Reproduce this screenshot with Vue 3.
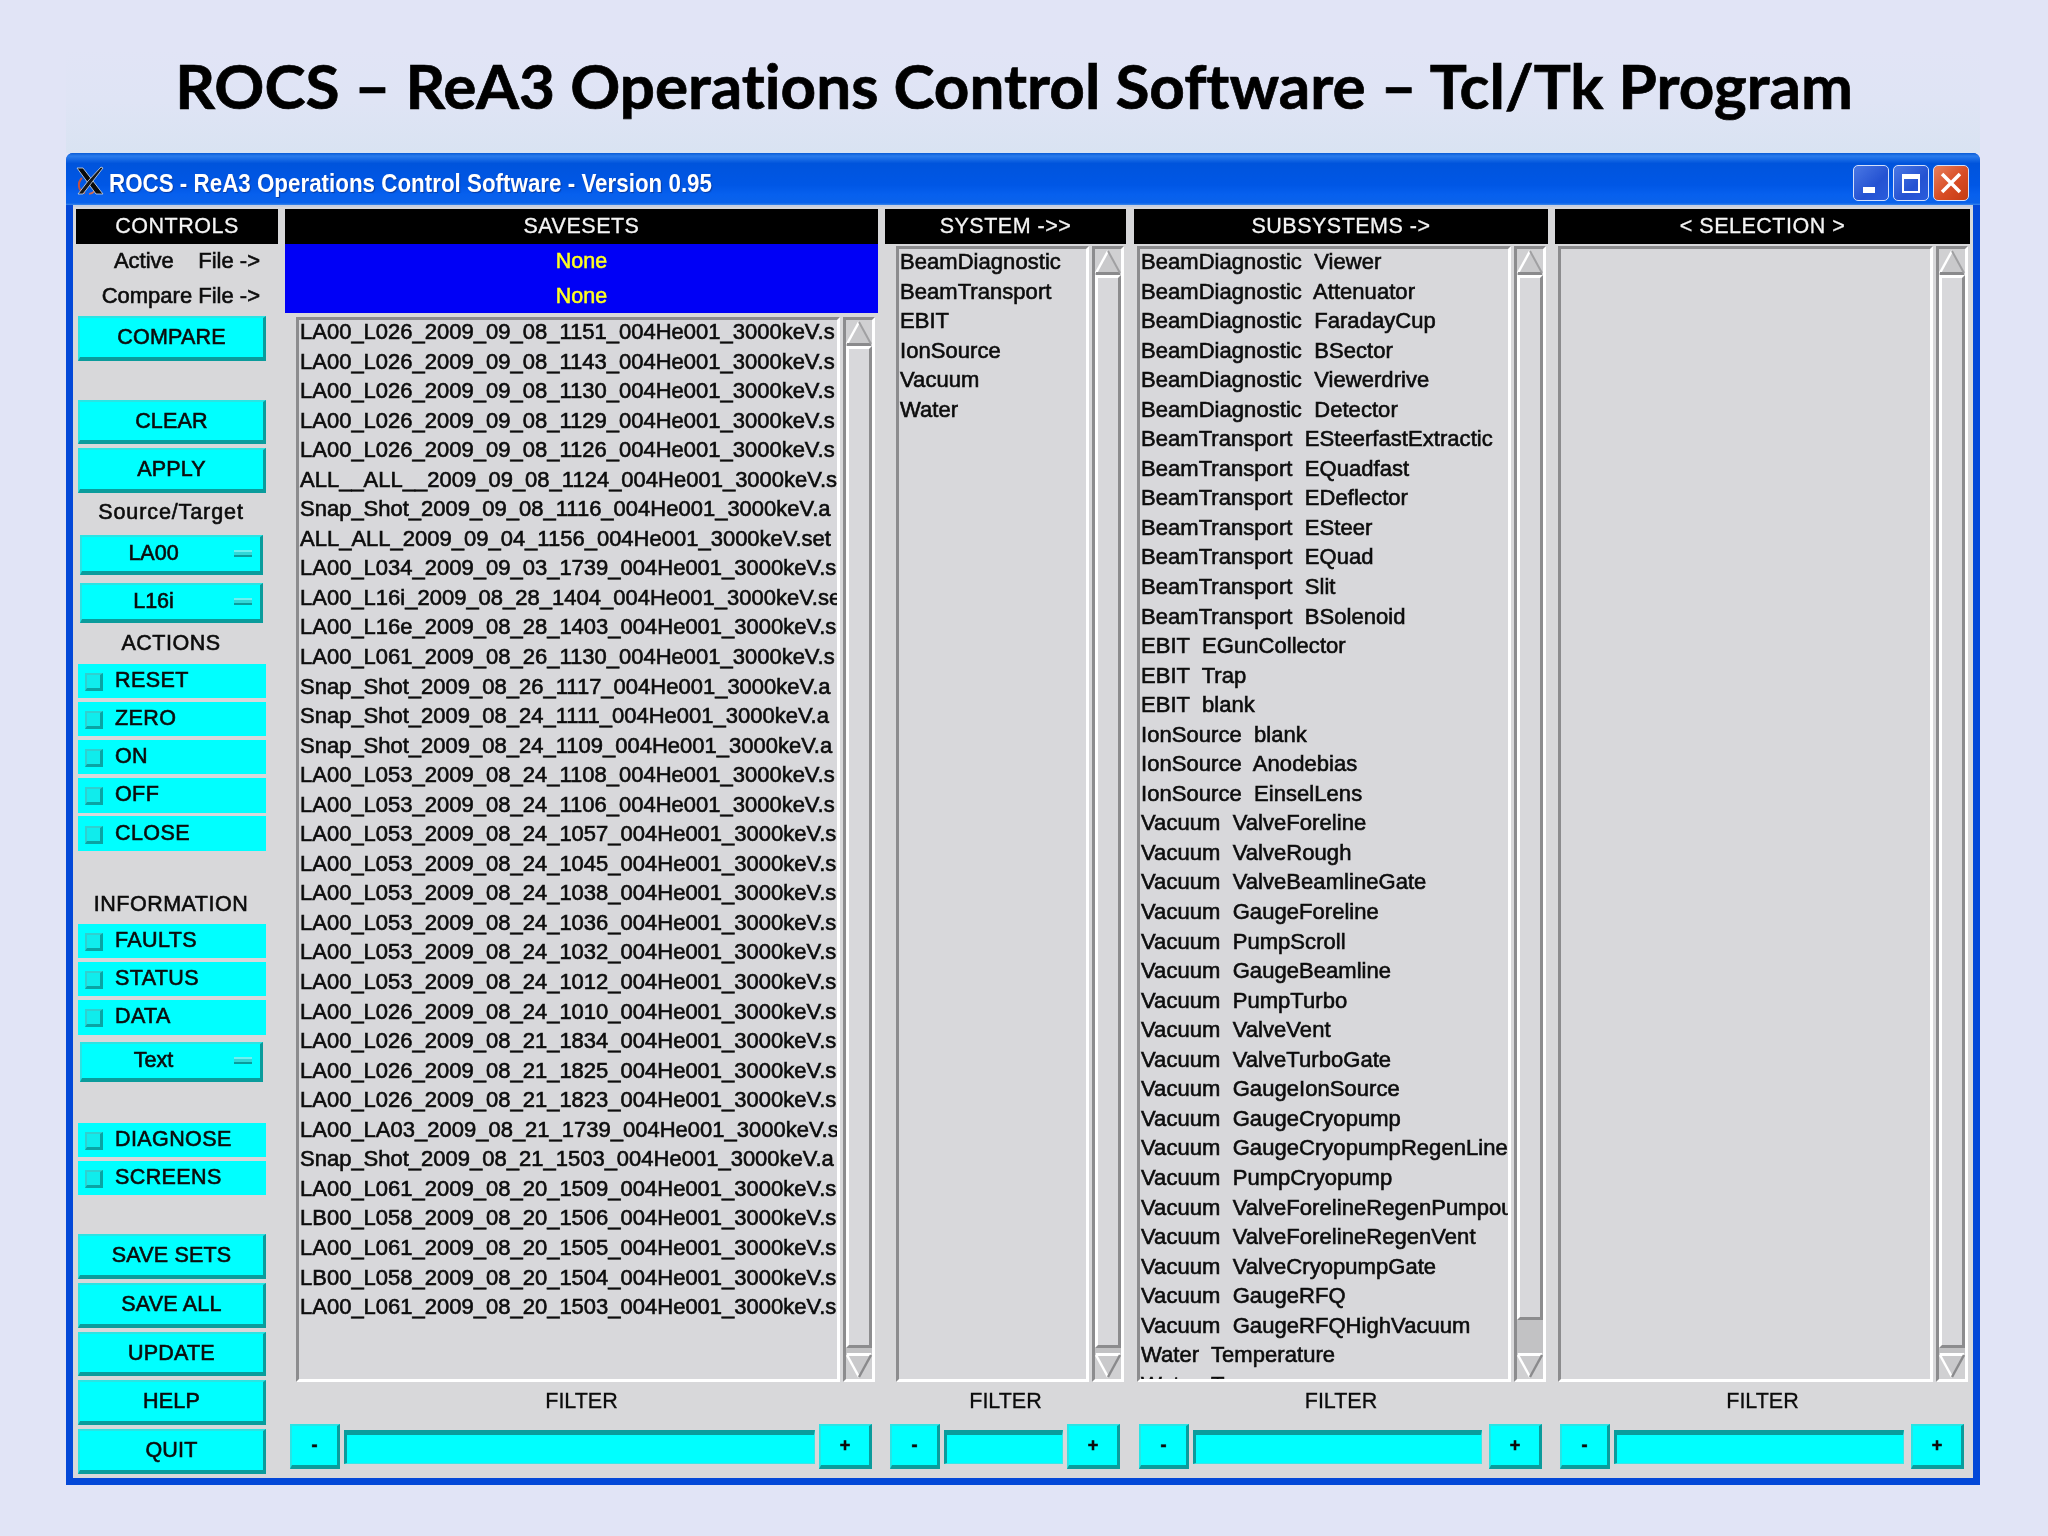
<script setup>
const stem = '_004He001_3000keV'
const savesets = [
  'LA00_L026_2009_09_08_1151.s','LA00_L026_2009_09_08_1143.s','LA00_L026_2009_09_08_1130.s','LA00_L026_2009_09_08_1129.s','LA00_L026_2009_09_08_1126.s',
  'ALL__ALL__2009_09_08_1124.s','Snap_Shot_2009_09_08_1116.a','ALL_ALL_2009_09_04_1156.set','LA00_L034_2009_09_03_1739.s','LA00_L16i_2009_08_28_1404.se',
  'LA00_L16e_2009_08_28_1403.s','LA00_L061_2009_08_26_1130.s','Snap_Shot_2009_08_26_1117.a','Snap_Shot_2009_08_24_1111.a','Snap_Shot_2009_08_24_1109.a',
  'LA00_L053_2009_08_24_1108.s','LA00_L053_2009_08_24_1106.s','LA00_L053_2009_08_24_1057.s','LA00_L053_2009_08_24_1045.s','LA00_L053_2009_08_24_1038.s',
  'LA00_L053_2009_08_24_1036.s','LA00_L053_2009_08_24_1032.s','LA00_L053_2009_08_24_1012.s','LA00_L026_2009_08_24_1010.s','LA00_L026_2009_08_21_1834.s',
  'LA00_L026_2009_08_21_1825.s','LA00_L026_2009_08_21_1823.s','LA00_LA03_2009_08_21_1739.s','Snap_Shot_2009_08_21_1503.a','LA00_L061_2009_08_20_1509.s',
  'LB00_L058_2009_08_20_1506.s','LA00_L061_2009_08_20_1505.s','LB00_L058_2009_08_20_1504.s','LA00_L061_2009_08_20_1503.s'
].map(s => { const i = s.lastIndexOf('.'); return s.slice(0, i) + stem + s.slice(i) })
const systems = ['BeamDiagnostic','BeamTransport','EBIT','IonSource','Vacuum','Water']
const subsystems = [
  'BeamDiagnostic  Viewer','BeamDiagnostic  Attenuator','BeamDiagnostic  FaradayCup','BeamDiagnostic  BSector','BeamDiagnostic  Viewerdrive','BeamDiagnostic  Detector',
  'BeamTransport  ESteerfastExtractic','BeamTransport  EQuadfast','BeamTransport  EDeflector','BeamTransport  ESteer','BeamTransport  EQuad','BeamTransport  Slit','BeamTransport  BSolenoid',
  'EBIT  EGunCollector','EBIT  Trap','EBIT  blank','IonSource  blank','IonSource  Anodebias','IonSource  EinselLens',
  'Vacuum  ValveForeline','Vacuum  ValveRough','Vacuum  ValveBeamlineGate','Vacuum  GaugeForeline','Vacuum  PumpScroll','Vacuum  GaugeBeamline','Vacuum  PumpTurbo','Vacuum  ValveVent','Vacuum  ValveTurboGate','Vacuum  GaugeIonSource','Vacuum  GaugeCryopump','Vacuum  GaugeCryopumpRegenLine','Vacuum  PumpCryopump','Vacuum  ValveForelineRegenPumpou','Vacuum  ValveForelineRegenVent','Vacuum  ValveCryopumpGate','Vacuum  GaugeRFQ','Vacuum  GaugeRFQHighVacuum','Water  Temperature','Water  T'
]
const actions = ['RESET','ZERO','ON','OFF','CLOSE']
const info = ['FAULTS','STATUS','DATA']
const tools = ['DIAGNOSE','SCREENS']
const bottom = ['SAVE SETS','SAVE ALL','UPDATE','HELP','QUIT']
const activeLabel = 'Active    File ->'
const compareLabel = 'Compare File ->'
const columns = [
  { key: 'system', title: 'SYSTEM ->>', items: systems, cls: 'c-system', rest: 5 },
  { key: 'subsystems', title: 'SUBSYSTEMS ->', items: subsystems, cls: 'c-sub', rest: 33 },
  { key: 'selection', title: '< SELECTION >', items: [], cls: 'c-sel', rest: 5 }
]
</script>

<template>
  <div class="slide">
    <div class="band"></div>
    <h1 class="title">ROCS – ReA3 Operations Control Software – Tcl/Tk Program</h1>
    <div class="window">
      <div class="titlebar">
        <svg class="xlogo" viewBox="0 0 28 30" width="28" height="30">
          <path d="M6 12 C1 17 2 25 9 27" fill="none" stroke="#c8503c" stroke-width="2"/>
          <path d="M18 19 C21 24 18 27 13 28" fill="none" stroke="#d06a50" stroke-width="1.6"/>
          <path d="M1 2 H7 L27 28 H20 Z" fill="#0a0a0a" stroke="#c0ccdf" stroke-width="0.9"/>
          <path d="M25 1 L27 2 L7 28 H2 L12 15 Z" fill="#181818" stroke="#c0ccdf" stroke-width="0.9"/>
        </svg>
        <span class="wintitle">ROCS - ReA3 Operations Control Software - Version 0.95</span>
        <div class="winbtns">
          <div class="wb wb-min"><i></i></div>
          <div class="wb wb-max"><i></i></div>
          <div class="wb wb-close">
            <svg viewBox="0 0 20 20" width="22" height="22"><path d="M3 3 L17 17 M17 3 L3 17" stroke="#fff" stroke-width="3.2" stroke-linecap="square"/></svg>
          </div>
        </div>
      </div>
      <div class="body">
        <section class="col c-controls">
          <div class="head">CONTROLS</div>
          <div class="filelabel">{{ activeLabel }}</div>
          <div class="filelabel">{{ compareLabel }}</div>
          <div class="btn m-compare">COMPARE</div>
          <div class="btn m-clear">CLEAR</div>
          <div class="btn m-apply">APPLY</div>
          <div class="lab l-source">Source/Target</div>
          <div class="opt">
            <span>LA00</span><i></i>
          </div>
          <div class="opt m-opt2">
            <span>L16i</span><i></i>
          </div>
          <div class="lab l-actions">ACTIONS</div>
          <div class="checks">
            <div v-for="a in actions" :key="a" class="check"><i></i><span>{{ a }}</span></div>
          </div>
          <div class="lab l-info">INFORMATION</div>
          <div class="checks">
            <div v-for="a in info" :key="a" class="check"><i></i><span>{{ a }}</span></div>
          </div>
          <div class="opt m-opt3">
            <span>Text</span><i></i>
          </div>
          <div class="checks m-tools">
            <div v-for="a in tools" :key="a" class="check"><i></i><span>{{ a }}</span></div>
          </div>
          <div class="stack">
            <div v-for="b in bottom" :key="b" class="btn">{{ b }}</div>
          </div>
        </section>

        <section class="col c-save">
          <div class="head">SAVESETS</div>
          <div class="none">None</div>
          <div class="none">None</div>
          <div class="listrow saverow">
            <div class="list">
              <ul>
                <li v-for="s in savesets" :key="s">{{ s }}</li>
              </ul>
            </div>
            <div class="scroll">
              <svg class="arr" viewBox="0 0 26 26" preserveAspectRatio="none"><path d="M13 2 L1 24 H25 Z" fill="#c9c9cb"/><path d="M13 2 L1 24" stroke="#fff" stroke-width="2.4"/><path d="M1 24.5 H25" stroke="#8a8a8c" stroke-width="3"/><path d="M13 2 L25 24" stroke="#a0a0a2" stroke-width="2"/></svg>
              <div class="thumb"></div>
              <div class="rest" :style="{ height: '5px' }"></div>
              <svg class="arr" viewBox="0 0 26 26" preserveAspectRatio="none"><path d="M13 24 L1 2 H25 Z" fill="#c9c9cb"/><path d="M1 1.5 H25" stroke="#fff" stroke-width="3"/><path d="M13 24 L1 2" stroke="#fff" stroke-width="2.4"/><path d="M13 24 L25 2" stroke="#8a8a8c" stroke-width="2.4"/></svg>
            </div>
          </div>
          <div class="filterlab">FILTER</div>
          <div class="filter">
            <div class="btn small">-</div>
            <div class="entry"></div>
            <div class="btn small plus">+</div>
          </div>
        </section>

        <section v-for="c in columns" :key="c.key" class="col" :class="c.cls">
          <div class="head">{{ c.title }}</div>
          <div class="listrow">
            <div class="list">
              <ul>
                <li v-for="(s, i) in c.items" :key="i">{{ s }}</li>
              </ul>
            </div>
            <div class="scroll">
              <svg class="arr" viewBox="0 0 26 26" preserveAspectRatio="none"><path d="M13 2 L1 24 H25 Z" fill="#c9c9cb"/><path d="M13 2 L1 24" stroke="#fff" stroke-width="2.4"/><path d="M1 24.5 H25" stroke="#8a8a8c" stroke-width="3"/><path d="M13 2 L25 24" stroke="#a0a0a2" stroke-width="2"/></svg>
              <div class="thumb"></div>
              <div class="rest" :style="{ height: c.rest + 'px' }"></div>
              <svg class="arr" viewBox="0 0 26 26" preserveAspectRatio="none"><path d="M13 24 L1 2 H25 Z" fill="#c9c9cb"/><path d="M1 1.5 H25" stroke="#fff" stroke-width="3"/><path d="M13 24 L1 2" stroke="#fff" stroke-width="2.4"/><path d="M13 24 L25 2" stroke="#8a8a8c" stroke-width="2.4"/></svg>
            </div>
          </div>
          <div class="filterlab">FILTER</div>
          <div class="filter">
            <div class="btn small">-</div>
            <div class="entry"></div>
            <div class="btn small plus">+</div>
          </div>
        </section>
      </div>
    </div>
  </div>
</template>

<style>
html, body { margin: 0; background: #e1e4f6; }
</style>

<style scoped>
.slide {
  position: relative;
  width: 2048px;
  height: 1536px;
  overflow: hidden;
  background: #e1e4f6;
  font-family: "Liberation Sans", Arial, sans-serif;
  color: #0c0c0c;
}
.band {
  position: absolute;
  left: 66px;
  top: 50px;
  width: 1914px;
  height: 103px;
  background: linear-gradient(#e1e4f6, #dfe4f5 50%, #d9e3f2);
}
.title {
  position: relative;
  margin: 0;
  height: 153px;
  box-sizing: border-box;
  padding: 47px 20px 0 0;
  font-family: Lato, "Open Sans", sans-serif;
  font-weight: 700;
  font-size: 62px;
  font-variant-ligatures: none;
  line-height: 76px;
  text-align: center;
  color: #000;
  white-space: nowrap;
  -webkit-text-stroke: 0.7px #000;
}
.window {
  position: relative;
  margin-left: 66px;
  width: 1914px;
  height: 1332px;
  box-sizing: border-box;
  border-radius: 7px 7px 0 0;
  background: #0348d8;
  overflow: hidden;
  display: flex;
  flex-direction: column;
  filter: blur(0.4px);
}
.titlebar {
  height: 52px;
  flex: none;
  display: flex;
  align-items: center;
  padding: 0 10px 0 10px;
  background: linear-gradient(#0a5cd6 0, #2a7cec 6%, #0054dc 20%, #0057e6 62%, #0760ee 80%, #0a62ea 96%, #3a86e8 100%);
}
.xlogo { flex: none; margin-top: 4px; }
.wintitle {
  margin-left: 5px;
  margin-top: 8px;
  color: #fff;
  font-weight: 700;
  font-size: 25px;
  line-height: 32px;
  white-space: pre;
  transform: scaleX(0.895);
  transform-origin: left center;
  text-shadow: 1px 1px 1px #0a3aa0;
}
.winbtns { margin-left: auto; display: flex; gap: 4px; margin-top: 8px; margin-right: 1px; }
.wb {
  width: 36px;
  height: 36px;
  box-sizing: border-box;
  border: 1.5px solid #d4e0fa;
  border-radius: 5px;
  display: flex;
  align-items: center;
  justify-content: center;
  background: linear-gradient(135deg, #4a78e4, #2452d2 60%, #2a5cdc);
}
.wb-min { align-items: flex-end; }
.wb-min i { display: block; width: 12px; height: 6px; background: #fff; margin: 0 5px 7px 0; }
.wb-max i { display: block; width: 18px; height: 19px; box-sizing: border-box; border: 2px solid #fff; border-top-width: 5px; }
.wb-close { background: linear-gradient(135deg, #e8805c, #d84c24 55%, #c43c14); }
.body {
  flex: 1;
  margin: 0 7.5px 7px 7px;
  background: #d8d8da;
  display: flex;
  padding: 4px 0 0 3px;
  gap: 7px;
  box-shadow: inset 0 2px 0 #c8cfe0;
}
.col { display: flex; flex-direction: column; flex: none; }
.c-controls { width: 202px; }
.c-save { width: 593px; }
.c-system { width: 241px; }
.c-sub { width: 414px; margin-left: 1px; }
.c-sel { width: 415px; }
.head {
  height: 35px;
  flex: none;
  background: #000;
  color: #f4f4f4;
  font-size: 21.5px;
  line-height: 35px;
  text-align: center;
  white-space: pre;
  letter-spacing: 0.5px;
  -webkit-text-stroke: 0.3px #f4f4f4;
}
.filelabel {
  height: 34.5px;
  line-height: 34px;
  font-size: 22px;
  text-align: right;
  padding-right: 18px;
  white-space: pre;
  -webkit-text-stroke: 0.6px #0c0c0c;
}
.btn {
  box-sizing: border-box;
  height: 44.5px;
  width: 188px;
  margin-left: 2px;
  flex: none;
  background: #00ffff;
  border-style: solid;
  border-width: 2px 3px 4px 2px;
  border-color: #2ae4e4 #0a9c9c #0a9c9c #2ae4e4;
  text-align: center;
  font-size: 21.5px;
  line-height: 38px;
  letter-spacing: 0.2px;
  -webkit-text-stroke: 0.6px #0c0c0c;
  white-space: pre;
}
.m-compare { margin-top: 3px; }
.m-clear { margin-top: 39px; }
.m-apply { margin-top: 4px; }
.lab {
  text-align: center;
  padding-right: 12px;
  font-size: 21.5px;
  -webkit-text-stroke: 0.6px #0c0c0c;
  white-space: pre;
  letter-spacing: 0.5px;
}
.l-source { height: 42px; line-height: 38px; letter-spacing: 0.9px; }
.l-actions { height: 41px; line-height: 41px; }
.l-info { height: 41px; line-height: 42px; margin-top: 32px; }
.opt {
  box-sizing: border-box;
  height: 40px;
  width: 183px;
  margin-left: 4px;
  flex: none;
  display: flex;
  align-items: center;
  background: #00ffff;
  border-style: solid;
  border-width: 2px 3px 4px 2px;
  border-color: #2ae4e4 #0a9c9c #0a9c9c #2ae4e4;
  font-size: 21.5px;
  -webkit-text-stroke: 0.6px #0c0c0c;
}
.opt span { flex: 1; text-align: center; padding-right: 9px; }
.opt i {
  flex: none;
  width: 18px;
  height: 7px;
  box-sizing: border-box;
  margin-right: 8px;
  background: #30d8d8;
  border-top: 2px solid #70f0f0;
  border-bottom: 2px solid #0a9c9c;
}
.m-opt2 { margin-top: 8px; }
.m-opt3 { margin-top: 7px; }
.checks { display: flex; flex-direction: column; gap: 3.7px; }
.check {
  height: 34.5px;
  width: 188px;
  margin-left: 2px;
  background: #00ffff;
  display: flex;
  align-items: center;
  font-size: 21.5px;
  letter-spacing: 0.4px;
  -webkit-text-stroke: 0.6px #0c0c0c;
}
.check i {
  flex: none;
  box-sizing: border-box;
  width: 18px;
  height: 18px;
  margin-left: 7px;
  margin-top: 2px;
  background: #10ecec;
  border-style: solid;
  border-width: 2px 3px 3px 2px;
  border-color: #30d0d0 #0aa4a4 #0aa4a4 #30d0d0;
}
.check span { margin-left: 12px; margin-top: -1px; }
.m-tools { margin-top: 41px; }
.stack { margin-top: 39px; display: flex; flex-direction: column; gap: 4.2px; }
.none {
  height: 34.5px;
  flex: none;
  background: #0000f6;
  color: #ffff20;
  font-size: 21.5px;
  -webkit-text-stroke: 0.5px #ffff20;
  line-height: 34px;
  text-align: center;
}
.listrow {
  height: 1136px;
  margin-top: 2px;
  display: flex;
  flex: none;
  padding-left: 11px;
  padding-right: 3px;
  gap: 3px;
}
.saverow { height: 1065px; margin-top: 4px; }
.list {
  flex: 1;
  min-width: 0;
  box-sizing: border-box;
  overflow: hidden;
  border-style: solid;
  border-width: 3px;
  border-color: #8c8c8e #fff #fff #8c8c8e;
  background: #d8d8db;
}
.list ul {
  list-style: none;
  margin: -2px 0 0;
  padding: 0 0 0 1px;
}
.saverow .list ul { margin-top: -3px; }
.list li {
  height: 29.56px;
  line-height: 29.56px;
  font-size: 22px;
  white-space: pre;
  color: #0c0c0c;
  letter-spacing: 0.05px;
  -webkit-text-stroke: 0.6px #0c0c0c;
}
.saverow .list li { letter-spacing: 0; }
.scroll {
  width: 32px;
  flex: none;
  box-sizing: border-box;
  border-style: solid;
  border-width: 3px;
  border-color: #8c8c8e #fff #fff #8c8c8e;
  background: #c2c2c4;
  display: flex;
  flex-direction: column;
}
.arr { width: 100%; height: 26px; flex: none; display: block; background: #d0d0d2; }
.thumb {
  flex: 1;
  background: #d8d8db;
  border-style: solid;
  border-width: 3px 3px 3px 3px;
  border-color: #fff #8c8c8e #8c8c8e #fff;
}
.rest { flex: none; }
.filterlab {
  height: 42px;
  line-height: 38px;
  text-align: center;
  font-size: 21.5px;
  flex: none;
  -webkit-text-stroke: 0.3px #0c0c0c;
}
.filter { display: flex; align-items: center; padding: 0 6px 0 5px; gap: 4px; height: 45px; }
.btn.small {
  width: 50px;
  height: 45px;
  margin: 0;
  line-height: 39px;
  font-size: 18px;
  font-weight: 700;
}
.btn.plus { width: 53px; }
.entry {
  flex: 1;
  height: 34px;
  box-sizing: border-box;
  background: #00ffff;
  border-style: solid;
  border-width: 5px 1px 1px 3px;
  border-color: #0a9c9c #3ae8e8 #3ae8e8 #0a9c9c;
}
.c-sub .entry, .c-sel .entry { margin-right: 3px; }
.c-sub .listrow { padding-left: 3px; padding-right: 2px; }
.c-system .listrow { padding-left: 11px; padding-right: 2px; }
.c-sel .listrow { padding-left: 3px; padding-right: 2px; }
</style>
